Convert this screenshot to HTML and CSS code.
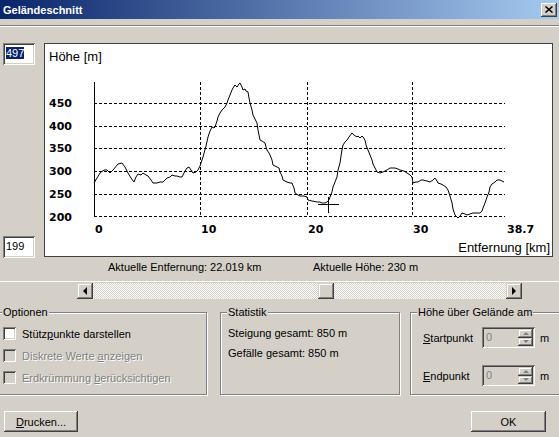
FILE: index.html
```html
<!DOCTYPE html>
<html lang="de">
<head>
    <meta charset="UTF-8">
    <title>Geländeschnitt</title>
    <link rel="stylesheet" href="styles.css">
</head>
<body>
<div class="caption">
    <span>Geländeschnitt</span>
    <div class="caption-btn">
        <svg width="8" height="7" viewBox="0 0 8 7"><path d="M0.5 0.5L7.5 6.5M7.5 0.5L0.5 6.5" stroke="#000" stroke-width="1.5" fill="none"/></svg>
    </div>
</div>
<div class="rule"></div>

<div class="view">
    <div class="range">
        <div class="edit"><span class="sel">497</span></div>
        <div class="edit">199</div>
    </div>
    <div class="plot">
        <svg width="507" height="212" viewBox="45 44 507 212">
            <text x="49" y="61" class="t-title">Höhe [m]</text>
            <path class="grid" d="M94 103.5H505M94 126.5H505M94 148.5H505M94 171.5H505M94 194.5H505M94 216.5H505M200.5 82V217M307.5 82V217M412.5 82V217"/>
            <path class="axis" d="M94.5 82V217"/>
            <g class="t-num">
                <text x="49" y="107">450</text>
                <text x="49" y="130">400</text>
                <text x="49" y="152">350</text>
                <text x="49" y="175">300</text>
                <text x="49" y="198">250</text>
                <text x="49" y="221">200</text>
                <text x="95" y="233">0</text>
                <text x="201" y="233">10</text>
                <text x="308" y="233">20</text>
                <text x="413" y="233">30</text>
                <text x="507" y="233">38.7</text>
            </g>
            <text x="550" y="252" class="t-title" text-anchor="end">Entfernung [km]</text>
            <!-- Profil -->
            <polyline class="profile" points="94,183 97,178 100,173 104,170 107,170 110,173 113,170 118,164 122,163 125,167 128,173 131,178 134,182 136,177 138,174 141,175 143,173 146,175 148,176 151,180 153,183 157,183 160,182 163,182 165,180 167,178 170,177 172,175 175,176 177,176 180,177 182,177 185,171 187,168 189,167 191,170 193,173 196,172 198,170 200,166 203,157 206,146 208,137 210,131 212,127 214,128 215,127 217,121 218,117 220,113 222,110 224,108 225,107 227,103 228,100 230,95 232,90 233,88 235,85 237,87 239,84 240,83 242,87 243,90 245,89 246,91 248,92 249,98 250,103 252,110 253,115 255,119 257,123 258,130 260,140 262,141 265,143 266,147 267,150 269,153 270,155 272,160 273,165 275,166 277,167 279,168 280,172 282,176 283,180 285,181 287,182 290,183 292,183 294,188 295,193 298,195 300,196 304,196 307,197 308,200 312,201 317,202 320,202 322,203 325,203 327,202 329,200 330,197 332,192 333,187 335,182 337,177 338,170 340,163 341,156 342,150 343,145 345,142 347,140 349,137 352,133 354,135 357,137 358,136 360,138 362,136 363,137 365,140 366,145 368,150 370,155 372,160 373,164 375,168 377,172 380,173 383,172 385,171 387,170 390,168 393,168 395,168 398,169 400,170 404,171 407,173 410,175 412,177 413,183 416,182 418,182 421,180 423,180 427,181 430,182 433,180 435,178 437,181 438,183 441,184 443,185 446,187 448,190 450,196 452,203 453,209 455,215 457,217 458,218 460,216 462,213 465,214 467,215 470,214 473,213 477,213 480,213 482,211 483,208 485,203 487,197 489,192 490,187 492,184 495,182 497,180 500,180 502,181 504,182"/>
            <path class="cross" d="M318 204.5H339M328.5 197V213"/>
        </svg>
    </div>
</div>

<div class="readout">
    <span class="dist">Aktuelle Entfernung: 22.019 km</span>
    <span>Aktuelle Höhe: 230 m</span>
</div>

<div class="scroll-row">
    <div class="scrollbar">
        <div class="sb-btn"><i class="arr-l"></i></div>
        <div class="sb-track"><div class="sb-thumb" style="margin-left: 225px"></div></div>
        <div class="sb-btn"><i class="arr-r"></i></div>
    </div>
</div>

<div class="groups">
    <div class="group g-opt">
        <div class="group-title">Optionen</div>
        <div class="check"><span class="box"></span><span>Stütz<u>p</u>unkte darstellen</span></div>
        <div class="check off"><span class="box"></span><span>Diskrete Werte <u>a</u>nzeigen</span></div>
        <div class="check off"><span class="box"></span><span>Erdkrümmung <u>b</u>erücksichtigen</span></div>
    </div>
    <div class="group g-stat">
        <div class="group-title">Statistik</div>
        <p>Steigung gesamt: 850 m</p>
        <p>Gefälle gesamt: 850 m</p>
    </div>
    <div class="group g-height">
        <div class="group-title">Höhe über Gelände am</div>
        <div class="spin-row">
            <span class="lbl"><u>S</u>tartpunkt</span>
            <div class="spin"><span class="val">0</span><div class="spin-btns"><div class="sp"><i class="up"></i></div><div class="sp"><i class="dn"></i></div></div></div>
            <span class="unit">m</span>
        </div>
        <div class="spin-row">
            <span class="lbl"><u>E</u>ndpunkt</span>
            <div class="spin"><span class="val">0</span><div class="spin-btns"><div class="sp"><i class="up"></i></div><div class="sp"><i class="dn"></i></div></div></div>
            <span class="unit">m</span>
        </div>
    </div>
</div>

<div class="actions">
    <button class="btn"><u>D</u>rucken...</button>
    <button class="btn btn-ok">OK</button>
</div>
</body>
</html>
```

FILE: styles.css
```css
* {
    margin: 0;
    padding: 0;
    box-sizing: border-box;
}

body {
    width: 559px;
    height: 437px;
    overflow: hidden;
    background: #D4D0C8;
    font-family: "Liberation Sans", Arial, sans-serif;
    font-size: 11px;
    color: #000;
}

/* Titelleiste */
.caption {
    display: flex;
    align-items: center;
    justify-content: space-between;
    height: 19px;
    padding: 0 2px 0 3px;
    background: linear-gradient(to right, #0A246A, #A6CAF0);
    color: #fff;
    font-weight: bold;
}
.caption-btn {
    display: flex;
    align-items: center;
    justify-content: center;
    width: 16px;
    height: 14px;
    background: #D4D0C8;
    box-shadow: inset -1px -1px #404040, inset 1px 1px #fff, inset -2px -2px #808080;
}
.caption-btn svg {
    display: block;
}
.rule {
    height: 2px;
    margin-top: 6px;
    border-top: 1px solid #808080;
    border-bottom: 1px solid #fff;
}

/* Diagramm */
.view {
    display: flex;
    height: 215px;
    margin-top: 16px;
}
.range {
    display: flex;
    flex-direction: column;
    justify-content: space-between;
    width: 44px;
    padding-left: 3px;
}
.edit {
    width: 32px;
    height: 22px;
    padding: 4px 0 0 3px;
    line-height: 13px;
    background: #fff;
    box-shadow: inset 1px 1px #808080, inset -1px -1px #fff, inset 2px 2px #404040, inset -2px -2px #D4D0C8;
}
.sel {
    background: #0A246A;
    color: #fff;
}
.plot {
    width: 509px;
    height: 214px;
    background: #fff;
    border: 1px solid #404040;
}
.plot svg {
    display: block;
}
.t-title {
    font-family: "Liberation Sans", Arial, sans-serif;
    font-size: 13px;
}
.t-num {
    font-family: "DejaVu Sans", sans-serif;
    font-size: 11px;
    font-weight: bold;
}
.grid {
    fill: none;
    stroke: #000;
    stroke-width: 1;
    stroke-dasharray: 3 2;
    shape-rendering: crispEdges;
}
.axis, .cross {
    fill: none;
    stroke: #000;
    stroke-width: 1;
    shape-rendering: crispEdges;
}
.profile {
    fill: none;
    stroke: #000;
    stroke-width: 1;
}

.readout {
    display: flex;
    margin-top: 3px;
    padding-left: 108px;
    line-height: 13px;
}
.readout .dist {
    width: 205px;
}

/* Scrollleiste */
.scroll-row {
    margin-top: 7px;
    border-top: 1px solid #fff;
    padding: 1px 0 0 77px;
}
.scrollbar {
    display: flex;
    width: 445px;
    height: 16px;
}
.sb-btn, .sb-thumb {
    display: flex;
    align-items: center;
    justify-content: center;
    width: 16px;
    height: 16px;
    background: #D4D0C8;
    box-shadow: inset -1px -1px #404040, inset 1px 1px #D4D0C8, inset -2px -2px #808080, inset 2px 2px #fff;
}
.sb-track {
    flex: 1;
    background: repeating-conic-gradient(#fff 0 25%, #D4D0C8 0 50%) 0 0 / 2px 2px;
}
.arr-l, .arr-r {
    width: 0;
    height: 0;
    border-top: 4px solid transparent;
    border-bottom: 4px solid transparent;
}
.arr-l {
    border-right: 4px solid #000;
}
.arr-r {
    border-left: 4px solid #000;
}

/* Gruppen */
.groups {
    display: flex;
    height: 83px;
    margin-top: 13px;
}
.group {
    position: relative;
    flex: none;
    border: 1px solid #808080;
    box-shadow: 1px 1px #fff, inset 1px 1px #fff;
}
.group-title {
    position: absolute;
    top: -7px;
    left: 6px;
    padding: 0 1px;
    line-height: 13px;
    background: #D4D0C8;
}
.g-opt {
    width: 212px;
    margin-left: -5px;
    padding: 14px 0 0 7px;
}
.check {
    display: flex;
    align-items: center;
    gap: 6px;
    height: 13px;
    margin-bottom: 9px;
}
.box {
    width: 13px;
    height: 13px;
    background: #fff;
    box-shadow: inset 1px 1px #808080, inset -1px -1px #fff, inset 2px 2px #404040, inset -2px -2px #D4D0C8;
}
.off {
    color: #808080;
    text-shadow: 1px 1px #fff;
}
.off .box {
    background: #D4D0C8;
}
.g-stat {
    width: 180px;
    margin-left: 13px;
    padding: 14px 0 0 7px;
}
.g-stat p {
    line-height: 13px;
    margin-bottom: 7px;
}
.g-height {
    width: 160px;
    margin-left: 10px;
    padding: 14px 0 0 12px;
}
.spin-row {
    display: flex;
    align-items: center;
    height: 21px;
}
.spin-row + .spin-row {
    margin-top: 17px;
}
.lbl {
    width: 59px;
}
.spin {
    display: flex;
    width: 53px;
    height: 21px;
    padding: 2px;
    box-shadow: inset 1px 1px #808080, inset -1px -1px #fff, inset 2px 2px #404040, inset -2px -2px #D4D0C8;
}
.val {
    flex: 1;
    padding: 2px 0 0 2px;
    color: #808080;
}
.spin-btns {
    display: flex;
    flex-direction: column;
    width: 15px;
}
.sp {
    flex: 1;
    display: flex;
    align-items: center;
    justify-content: center;
    box-shadow: inset -1px -1px #404040, inset 1px 1px #D4D0C8, inset -2px -2px #808080, inset 2px 2px #fff;
}
.up, .dn {
    width: 0;
    height: 0;
    border-left: 3px solid transparent;
    border-right: 3px solid transparent;
}
.up {
    border-bottom: 3px solid #808080;
}
.dn {
    border-top: 3px solid #808080;
}
.unit {
    margin-left: 5px;
}

/* Knöpfe */
.actions {
    display: flex;
    justify-content: space-between;
    margin-top: 16px;
    padding: 0 13px 0 4px;
}
.btn {
    width: 74px;
    height: 21px;
    border: 0;
    background: #D4D0C8;
    font: inherit;
    color: #000;
    box-shadow: inset -1px -1px #404040, inset 1px 1px #fff, inset -2px -2px #808080, inset 2px 2px #D4D0C8;
}
.btn-ok {
    width: 75px;
}
```
